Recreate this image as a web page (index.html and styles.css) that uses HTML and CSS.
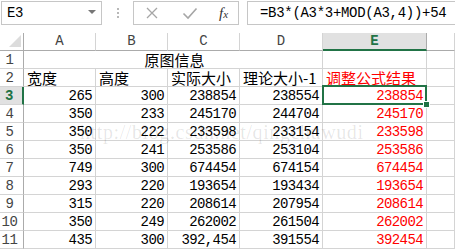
FILE: index.html
```html
<!DOCTYPE html>
<html lang="zh-CN">
<head>
    <meta charset="UTF-8">
    <title>原图信息 - 工作表</title>
    <link rel="stylesheet" href="styles.css">
</head>
<body>
    <div class="formula-bar">
        <div class="name-box">
            <span>E3</span>
            <span class="caret"></span>
        </div>
        <div class="grip"><i></i><i></i><i></i></div>
        <div class="fx-box">
            <svg class="icon" width="14" height="14" viewBox="0 0 14 14">
                <path d="M2 2 L12 12 M12 2 L2 12" stroke="#a6a6a6" stroke-width="1.3" fill="none"/>
            </svg>
            <svg class="icon" width="16" height="14" viewBox="0 0 16 14">
                <path d="M1.5 7.5 L6 12 L14.5 2.5" stroke="#a6a6a6" stroke-width="1.6" fill="none"/>
            </svg>
            <span class="fx">f<small>x</small></span>
        </div>
        <div class="formula">=B3*(A3*3+MOD(A3,4))+54</div>
    </div>

    <div class="sheet">
        <div class="corner"></div>
        <div class="col-head">A</div>
        <div class="col-head">B</div>
        <div class="col-head">C</div>
        <div class="col-head">D</div>
        <div class="col-head active">E</div>
        <div class="col-head"></div>

        <div class="row-head">1</div>
        <div class="cell merged">原图信息</div>
        <div class="cell"></div>
        <div class="cell"></div>

        <div class="row-head">2</div>
        <div class="cell text">宽度</div>
        <div class="cell text">高度</div>
        <div class="cell text">实际大小</div>
        <div class="cell text">理论大小-1</div>
        <div class="cell text red">调整公式结果</div>
        <div class="cell"></div>
    </div>

    <div class="watermark">http://blog.csdn.net/qingchuwudi</div>

    <script>
        const rows = [
            [265, 300, '238854', '238554', '238854'],
            [350, 233, '245170', '244704', '245170'],
            [350, 222, '233598', '233154', '233598'],
            [350, 241, '253586', '253104', '253586'],
            [749, 300, '674454', '674154', '674454'],
            [293, 220, '193654', '193434', '193654'],
            [315, 220, '208614', '207954', '208614'],
            [350, 249, '262002', '261504', '262002'],
            [435, 300, '392,454', '391554', '392454']
        ];

        const sheet = document.querySelector('.sheet');

        rows.forEach((row, i) => {
            const num = i + 3;
            const head = document.createElement('div');
            head.className = 'row-head' + (num === 3 ? ' active' : '');
            head.textContent = num;
            sheet.appendChild(head);

            row.forEach((value, col) => {
                const cell = document.createElement('div');
                cell.className = 'cell num' + (col === 4 ? ' red' : '');
                if (num === 3 && col === 4) cell.classList.add('selected');
                cell.textContent = value;
                sheet.appendChild(cell);
            });

            const rest = document.createElement('div');
            rest.className = 'cell';
            sheet.appendChild(rest);
        });

        // 选中单元格的填充柄
        const handle = document.createElement('span');
        handle.className = 'fill-handle';
        document.querySelector('.selected').appendChild(handle);
    </script>
</body>
</html>
```

FILE: styles.css
```css
* {
    margin: 0;
    padding: 0;
    box-sizing: border-box;
}

body {
    width: 455px;
    height: 251px;
    overflow: hidden;
    background: white;
    position: relative;
    font-family: 'Liberation Mono', monospace;
    color: #000;
}

/* 编辑栏 */
.formula-bar {
    display: flex;
    align-items: center;
    height: 25px;
    padding: 1px 0 0 1px;
}

.name-box {
    width: 101px;
    height: 24px;
    border: 1px solid #c6c6c6;
    display: flex;
    align-items: center;
    justify-content: space-between;
    padding: 0 5px 0 5px;
    font-size: 14px;
    letter-spacing: -0.4px;
}

.caret {
    width: 0;
    height: 0;
    border-left: 4px solid transparent;
    border-right: 4px solid transparent;
    border-top: 4px solid #767676;
    margin-top: -2px;
}

.grip {
    width: 31px;
    display: flex;
    flex-direction: column;
    align-items: center;
    gap: 2px;
}

.grip i {
    width: 2px;
    height: 2px;
    background: #b8b8b8;
}

.fx-box {
    width: 106px;
    height: 24px;
    border: 1px solid #c6c6c6;
    display: flex;
    align-items: center;
    padding-left: 11px;
    gap: 23px;
}

.fx {
    font-family: 'Liberation Serif', serif;
    font-style: italic;
    font-size: 15px;
    color: #333;
    margin-left: -2px;
}

.fx small {
    font-size: 11px;
}

.formula {
    flex: 1;
    height: 24px;
    margin-left: 8px;
    margin-right: -20px;
    border: 1px solid #c6c6c6;
    display: flex;
    align-items: center;
    padding-left: 12px;
    font-size: 14px;
    letter-spacing: -0.3px;
}

/* 工作表 */
.sheet {
    display: grid;
    grid-template-columns: 24px 72px 72px 72px 83px 104px 1fr;
    grid-template-rows: repeat(12, 18px);
    margin-top: 8px;
}

.corner {
    position: relative;
    border-right: 1px solid #ababab;
    border-bottom: 1px solid #ababab;
}

.corner::after {
    content: "";
    position: absolute;
    right: 2px;
    bottom: 3px;
    border-left: 12px solid transparent;
    border-bottom: 12px solid #dcdcdc;
}

.col-head {
    border-right: 1px solid #d4d4d4;
    border-bottom: 1px solid #ababab;
    text-align: center;
    font-size: 14px;
    line-height: 17px;
    color: #444;
}

.col-head.active {
    background: #e1e1e1;
    border-bottom: 2px solid #217346;
    color: #217346;
    font-weight: bold;
    border-right-color: #ababab;
}

.row-head {
    border-right: 1px solid #ababab;
    border-bottom: 1px solid #d4d4d4;
    text-align: center;
    padding-right: 4px;
    font-size: 14px;
    letter-spacing: -0.5px;
    line-height: 18px;
    color: #444;
}

.row-head.active {
    background: #e1e1e1;
    border-right: 2px solid #217346;
    color: #217346;
    font-weight: bold;
}

.cell {
    position: relative;
    border-right: 1px solid #d4d4d4;
    border-bottom: 1px solid #d4d4d4;
    white-space: nowrap;
    overflow: visible;
}

.merged {
    grid-column: span 4;
    text-align: center;
}

.merged,
.text {
    font-family: 'Noto Sans CJK SC', sans-serif;
    font-size: 15px;
    line-height: 18px;
    padding-left: 3px;
}

.num {
    text-align: right;
    padding-right: 3px;
    font-size: 14px;
    letter-spacing: -0.6px;
    line-height: 19px;
}

.red {
    color: #ff0000;
}

.selected::before {
    content: "";
    position: absolute;
    top: -2px;
    left: -1px;
    right: -1px;
    bottom: -1px;
    border: 2px solid #217346;
    z-index: 1;
}

.fill-handle {
    position: absolute;
    right: -4px;
    bottom: -4px;
    width: 7px;
    height: 7px;
    background: #217346;
    border: 1px solid white;
    z-index: 2;
}

.watermark {
    position: absolute;
    left: 80px;
    top: 121px;
    font-family: 'Liberation Serif', serif;
    font-size: 20px;
    letter-spacing: 0.6px;
    color: rgba(0, 0, 0, 0.1);
    pointer-events: none;
}
```
